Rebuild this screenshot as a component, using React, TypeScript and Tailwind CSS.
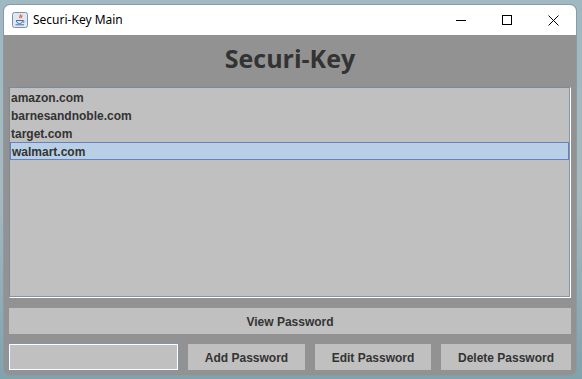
import React from "react";

const sites = ["amazon.com", "barnesandnoble.com", "target.com", "walmart.com"];

const JavaIcon: React.FC = () => (
  <svg width="16" height="16" viewBox="0 0 16 16">
    <rect x="0.5" y="0.5" width="15" height="15" rx="2" fill="#dfe8f2" stroke="#7b93b0" />
    <path d="M8 2.5c1.5 1.2-1.2 2.2 0 3.6M9.6 3.2c0.8 0.9-0.8 1.5 0 2.6" stroke="#e8681c" strokeWidth="1.3" fill="none" />
    <path d="M4 8.5h7c1.3 0 1.3 2 0 2M4.5 8.5c0 2.2 1.2 3 3 3s3-0.8 3-3" stroke="#4a6fa0" strokeWidth="1" fill="none" />
    <path d="M3.5 12.8h8.5" stroke="#4a6fa0" strokeWidth="1" />
  </svg>
);

const App: React.FC = () => {
  const selected = 3;

  return (
    <div className="relative w-[582px] h-[379px] overflow-hidden bg-gradient-to-b from-[#9fb8c2] via-[#a8b9be] to-[#7fa3ad]">
      {/* window on the desktop */}
      <div className="absolute left-[3px] top-[4px] w-[574px] h-[372px] flex flex-col border border-[#8a9aa6] rounded-t-[7px] rounded-b-[7px] overflow-hidden bg-[#929292]">
        {/* title bar */}
        <div className="h-[30px] bg-white flex items-center shrink-0">
          <div className="ml-[8px]">
            <JavaIcon />
          </div>
          <span className="ml-[5px] text-[12px] text-black" style={{ fontFamily: '"Segoe UI", "Noto Sans", sans-serif' }}>
            Securi-Key Main
          </span>
          <div className="ml-auto flex items-center h-full">
            <div className="w-[46px] h-full flex items-center justify-center">
              <div className="w-[10px] h-px bg-black" />
            </div>
            <div className="w-[46px] h-full flex items-center justify-center">
              <div className="w-[10px] h-[10px] border border-black" />
            </div>
            <div className="w-[46px] h-full flex items-center justify-center">
              <svg width="11" height="11" viewBox="0 0 11 11">
                <path d="M0.5 0.5L10.5 10.5M10.5 0.5L0.5 10.5" stroke="#000" strokeWidth="1" />
              </svg>
            </div>
          </div>
        </div>

        {/* content */}
        <div className="flex-1 flex flex-col px-[5px] pb-[5px]" style={{ fontFamily: '"Liberation Sans", Arial, sans-serif' }}>
          <div className="h-[52px] flex items-center justify-center">
            <h1 className="text-[25px] font-bold text-[#333333] leading-none pb-[5px]" style={{ fontFamily: '"Open Sans", "Noto Sans", sans-serif' }}>
              Securi-Key
            </h1>
          </div>

          <div className="h-[211px] bg-[#c0c0c0] border-t border-l border-[#7d8a98] border-r border-b border-r-white border-b-white shadow-[inset_-1px_-1px_0_#8595a8] flex flex-col">
            {sites.map((s, i) => (
              <div
                key={s}
                className={`h-[18px] flex items-center pl-[1px] pt-px text-[12px] font-bold text-[#333333] ${
                  i === selected ? "bg-[#b8cfe5] border border-[#6382bf] pl-0 mr-[1px]" : ""
                }`}
              >
                {s}
              </div>
            ))}
          </div>

          <button className="mt-[10px] h-[26px] pt-px bg-[#c0c0c0] text-[12px] font-bold text-[#333333]">
            View Password
          </button>

          <div className="mt-[10px] h-[26px] flex gap-[10px]">
            <div className="w-[169px] bg-[#c0c0c0] border border-white shadow-[0_0_0_1px_#8595a8]" />
            <button className="w-[117px] pt-px bg-[#c0c0c0] text-[12px] font-bold text-[#333333]">Add Password</button>
            <button className="w-[116px] pt-px bg-[#c0c0c0] text-[12px] font-bold text-[#333333]">Edit Password</button>
            <button className="w-[130px] pt-px bg-[#c0c0c0] text-[12px] font-bold text-[#333333]">Delete Password</button>
          </div>
        </div>
      </div>
    </div>
  );
};

export default App;
